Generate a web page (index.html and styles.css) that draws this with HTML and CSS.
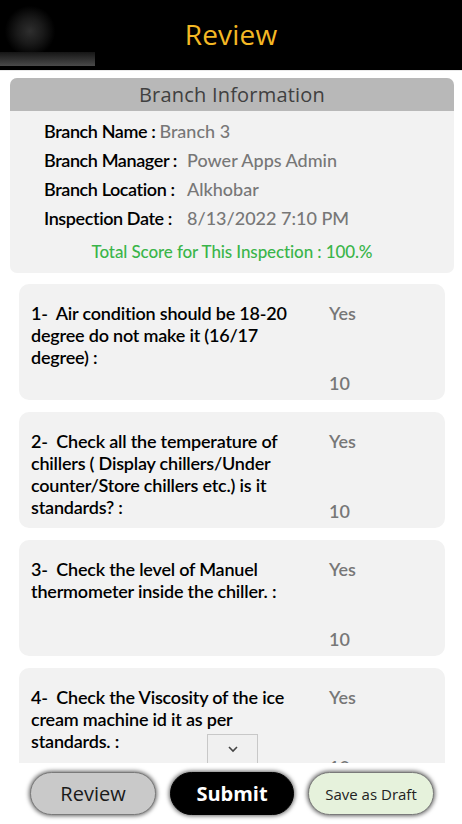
FILE: index.html
```html
<!DOCTYPE html>
<html>
<head>
<meta charset="utf-8">
<link rel="stylesheet" href="styles.css">
</head>
<body>
<div class="app">
  <header class="topbar">
    <div class="logo"><div class="logo-blob"></div><div class="logo-strip"></div></div>
    <h1 class="title">Review</h1>
  </header>
  <main class="content">
    <section class="branch">
      <div class="branch-head">Branch Information</div>
      <div class="branch-body">
        <div class="row"><span class="lbl">Branch Name :</span><span class="val">Branch 3</span></div>
        <div class="row"><span class="lbl wide">Branch Manager :</span><span class="val">Power Apps Admin</span></div>
        <div class="row"><span class="lbl wide">Branch Location :</span><span class="val">Alkhobar</span></div>
        <div class="row"><span class="lbl wide">Inspection Date :</span><span class="val">8/13/2022 7:10 PM</span></div>
        <div class="score">Total Score for This Inspection : 100.%</div>
      </div>
    </section>
    <div class="questions">
      <div class="qcard">
        <div class="qtext">1-&nbsp; Air condition should be 18-20 degree do not make it (16/17 degree) :</div>
        <div class="qside"><span class="ans">Yes</span><span class="pts">10</span></div>
      </div>
      <div class="qcard">
        <div class="qtext">2-&nbsp; Check all the temperature of chillers ( Display chillers/Under counter/Store chillers etc.) is it standards? :</div>
        <div class="qside"><span class="ans">Yes</span><span class="pts">10</span></div>
      </div>
      <div class="qcard">
        <div class="qtext">3-&nbsp; Check the level of Manuel thermometer inside the chiller. :</div>
        <div class="qside"><span class="ans">Yes</span><span class="pts">10</span></div>
      </div>
      <div class="qcard">
        <div class="qtext">4-&nbsp; Check the Viscosity of the ice cream machine id it as per standards. :</div>
        <div class="qside"><span class="ans">Yes</span><span class="pts">10</span></div>
      </div>
    </div>
    <button class="scroll-btn" aria-label="More">
      <svg width="12" height="8" viewBox="0 0 12 8"><path d="M2 2 L6 6 L10 2" fill="none" stroke="#444" stroke-width="1.6"/></svg>
    </button>
  </main>
  <footer class="actions">
    <button class="btn btn-review">Review</button>
    <button class="btn btn-submit">Submit</button>
    <button class="btn btn-draft">Save as Draft</button>
  </footer>
</div>
</body>
</html>
```

FILE: styles.css
```css
* { box-sizing: border-box; }
html, body { margin: 0; padding: 0; background: #fff; }
body { font-family: Lato, "Open Sans", sans-serif; }
.app { width: 462px; height: 824px; display: flex; flex-direction: column; overflow: hidden; }

.topbar {
  height: 71px; flex: none; background: #000; position: relative;
  border-bottom: 1px solid #e9e9e9;
  display: flex; align-items: center; justify-content: center;
}
.logo { position: absolute; left: 0; top: 0; width: 95px; height: 66px; overflow: hidden; }
.logo-blob {
  position: absolute; left: 4px; top: 6px; width: 52px; height: 50px;
  background: radial-gradient(circle at 50% 50%, #2e2e2e 0%, #1a1a1a 35%, #000 70%);
}
.logo-strip {
  position: absolute; left: 0; bottom: 0; width: 95px; height: 14px;
  background: linear-gradient(to bottom, #151515, #4a4a4a);
}
.title {
  margin: 0; font-family: "Open Sans", sans-serif; font-weight: 400;
  font-size: 28px; color: #f4b824; letter-spacing: 0.2px; padding-bottom: 3px;
}

.content { flex: 1; position: relative; overflow: hidden; padding: 7px 0 0; }

.branch { margin: 0 8px 0 10px; border-radius: 7px; overflow: hidden; background: #f2f2f2; }
.branch-head {
  background: #b8b8b8; height: 33px; display: flex; align-items: center; justify-content: center;
  font-family: "Open Sans", sans-serif; font-size: 20px; font-weight: 500; color: #404040; letter-spacing: 0.2px;
}
.branch-body { padding: 6px 0 11px 34px; }
.row { display: flex; align-items: baseline; height: 29px; line-height: 29px; font-size: 18px; }
.lbl { color: #000; font-weight: 600; letter-spacing: -0.4px; margin-right: 4px; }
.lbl.wide { width: 139px; margin-right: 4px; }
.val { color: #777; font-weight: 500; }
.score {
  margin-left: -34px; text-align: center; color: #3ab54a; font-size: 17px; font-weight: 500;
  padding-top: 9px; line-height: 20px; letter-spacing: -0.1px;
}

.questions { display: flex; flex-direction: column; gap: 12px; padding: 11px 17px 0 19px; }
.qcard {
  height: 116px; flex: none; background: #f2f2f2; border-radius: 10px;
  display: grid; grid-template-columns: 298px 1fr; padding: 18px 0 6px 12px;
}
.qtext { font-size: 18px; font-weight: 600; color: #000; line-height: 22px; padding-right: 34px; letter-spacing: -0.2px; }
.qside { display: flex; flex-direction: column; justify-content: space-between; font-size: 18px; font-weight: 600; color: #777; line-height: 22px; }

.scroll-btn {
  position: absolute; left: 207px; bottom: 0; width: 51px; height: 29px;
  background: #f0f0f0; border: 1px solid #c8c8c8; border-bottom: none; padding: 0;
  display: flex; align-items: center; justify-content: center;
}

.actions {
  height: 61px; flex: none; background: #fff;
  display: flex; align-items: center; gap: 14px; padding: 0 0 0 30px;
}
.btn {
  height: 43px; width: 126px; border-radius: 22px; font-family: "Open Sans", sans-serif;
  border: 1px solid #7a7a7a; box-shadow: 0 0 4px 1px rgba(0,0,0,0.6); cursor: pointer; padding: 0;
}
.btn-review { background: #c9c9c9; color: #1a1a1a; font-size: 20px; }
.btn-submit { background: #000; color: #fff; font-size: 20px; font-weight: 700; width: 124px; border-color: #000; }
.btn-draft { background: #e6f2dc; color: #222; font-size: 15px; width: 126px; }
```
